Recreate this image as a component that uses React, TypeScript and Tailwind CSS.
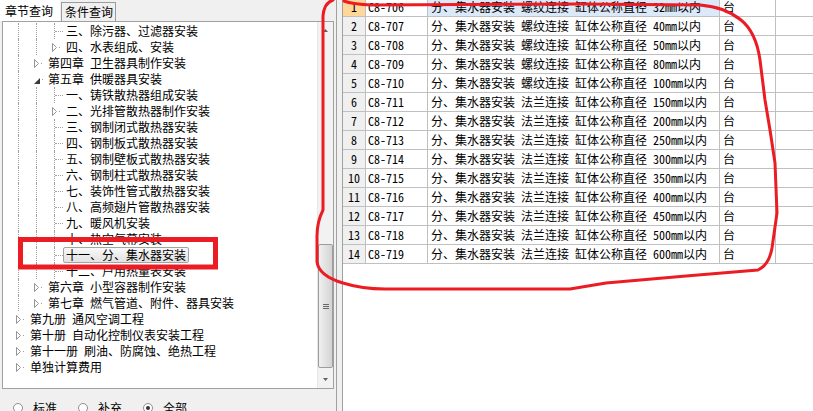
import React from 'react'

type Node = { lv: number; kind: 'leaf' | 'closed' | 'open'; text: string; sel?: boolean }

const tree: Node[] = [
  { lv: 3, kind: 'leaf', text: '三、除污器、过滤器安装' },
  { lv: 3, kind: 'closed', text: '四、水表组成、安装' },
  { lv: 2, kind: 'closed', text: '第四章 卫生器具制作安装' },
  { lv: 2, kind: 'open', text: '第五章 供暖器具安装' },
  { lv: 3, kind: 'leaf', text: '一、铸铁散热器组成安装' },
  { lv: 3, kind: 'closed', text: '二、光排管散热器制作安装' },
  { lv: 3, kind: 'leaf', text: '三、钢制闭式散热器安装' },
  { lv: 3, kind: 'leaf', text: '四、钢制板式散热器安装' },
  { lv: 3, kind: 'leaf', text: '五、钢制壁板式散热器安装' },
  { lv: 3, kind: 'leaf', text: '六、钢制柱式散热器安装' },
  { lv: 3, kind: 'leaf', text: '七、装饰性管式散热器安装' },
  { lv: 3, kind: 'leaf', text: '八、高频翅片管散热器安装' },
  { lv: 3, kind: 'leaf', text: '九、暖风机安装' },
  { lv: 3, kind: 'leaf', text: '十、热空气幕安装' },
  { lv: 3, kind: 'leaf', text: '十一、分、集水器安装', sel: true },
  { lv: 3, kind: 'leaf', text: '十二、户用热量表安装' },
  { lv: 2, kind: 'closed', text: '第六章 小型容器制作安装' },
  { lv: 2, kind: 'closed', text: '第七章 燃气管道、附件、器具安装' },
  { lv: 1, kind: 'closed', text: '第九册 通风空调工程' },
  { lv: 1, kind: 'closed', text: '第十册 自动化控制仪表安装工程' },
  { lv: 1, kind: 'closed', text: '第十一册 刷油、防腐蚀、绝热工程' },
  { lv: 1, kind: 'closed', text: '单独计算费用' },
]

const sizes = [32, 40, 50, 80, 100, 150, 200, 250, 300, 350, 400, 450, 500, 600]
const rows = sizes.map((d, i) => ({
  n: i + 1,
  code: `C8-${706 + i}`,
  name: ['分、集水器安装', i < 5 ? '螺纹连接' : '法兰连接', '缸体公称直径', `${d}mm以内`].join('\u2002'),
}))

function Guide() {
  return (
    <div className="w-[18px] h-full flex">
      <div className="w-[9px]" />
      <div className="h-full border-l border-dotted border-[#a0a0a0]" />
    </div>
  )
}

function Connector({ kind }: { kind: Node['kind'] }) {
  if (kind === 'leaf') {
    return (
      <div className="w-[18px] h-full flex">
        <div className="w-[9px]" />
        <div className="flex-1 h-full border-l border-dotted border-[#a0a0a0] flex items-center">
          <div className="w-full border-t border-dotted border-[#a0a0a0]" />
        </div>
      </div>
    )
  }
  if (kind === 'open') {
    return (
      <div className="w-[18px] h-full flex items-center">
        <div className="w-[7px]" />
        <svg width="6" height="6" viewBox="0 0 6 6" className="mt-[3px]">
          <path d="M6 0 V6 H0 Z" fill="#3a3a3a" />
        </svg>
        <div className="ml-[2px] w-px h-px bg-[#a0a0a0]" />
      </div>
    )
  }
  return (
    <div className="w-[18px] h-full flex items-center">
      <div className="w-[7px]" />
      <svg width="5" height="9" viewBox="0 0 5 9">
        <path d="M0.5 0.5 L4.5 4.5 L0.5 8.5 Z" fill="#fff" stroke="#959595" strokeWidth="1" />
      </svg>
      <div className="ml-[2px] w-px h-px bg-[#a0a0a0]" />
    </div>
  )
}

function TreeRow({ node }: { node: Node }) {
  const guides = []
  for (let k = 1; k < node.lv; k++) guides.push(<Guide key={k} />)
  return (
    <div className="h-[16px] flex pl-[6px]">
      {guides}
      <Connector kind={node.kind} />
      <div
        className={
          node.sel
            ? 'h-full px-[2px] border border-[#a3a3a3] rounded-[2px] bg-gradient-to-b from-[#f8f8f8] to-[#e2e2e2] leading-[14px] whitespace-pre'
            : 'h-full px-[2px] border border-transparent leading-[14px] whitespace-pre'
        }
      >
        {node.text.split(' ').join('\u2002')}
      </div>
    </div>
  )
}

function Radio({ label, on }: { label: string; on?: boolean }) {
  return (
    <div className="w-[65px] flex items-center">
      <div className="w-[10px] h-[10px] rounded-full border border-[#8e8f8f] bg-white flex items-center justify-center">
        {on && <div className="w-[4px] h-[4px] rounded-full bg-[#333]" />}
      </div>
      <span className="ml-[10px]">{label}</span>
    </div>
  )
}

export default function App() {
  return (
    <div className="relative w-[813px] h-[411px] overflow-hidden flex bg-[#f0f0f0] text-[12px] text-black font-['Noto_Sans_Mono_CJK_SC','Noto_Sans_CJK_SC',sans-serif]">
      {/* left: chapter tree */}
      <div className="w-[334px] flex flex-col shrink-0">
        <div className="h-[21px] shrink-0 flex items-end">
          <div className="h-[21px] w-[60px] pl-[5px] flex items-center bg-white">章节查询</div>
          <div className="ml-[1px] h-[19px] w-[55px] pl-[3px] flex items-center border border-b-0 border-[#9b9b9b] bg-[#f0f0f0]">
            条件查询
          </div>
        </div>
        <div className="ml-[2px] w-[332px] h-[368px] shrink-0 border border-[#a0a0a0] flex bg-white">
          <div className="flex-1 pt-[1px] overflow-hidden">
            {tree.map((n, i) => (
              <TreeRow key={i} node={n} />
            ))}
          </div>
          <div className="w-[16px] flex flex-col bg-[#f2f2f2] border-l border-[#e6e6e6]">
            <div className="h-[17px] flex items-center justify-center">
              <svg width="5" height="3" viewBox="0 0 5 3">
                <path d="M2.5 0 L5 3 H0 Z" fill="#606060" />
              </svg>
            </div>
            <div className="flex-1 flex flex-col">
              <div className="h-[205px]" />
              <div className="h-[124px] rounded-[2px] border border-[#9c9c9c] bg-gradient-to-r from-[#f0f0f0] to-[#d4d4d4] flex flex-col items-center justify-center gap-px">
                <div className="w-[6px] h-px bg-[#6a6a6a]" />
                <div className="w-[6px] h-px bg-[#6a6a6a]" />
                <div className="w-[6px] h-px bg-[#6a6a6a]" />
              </div>
            </div>
            <div className="h-[17px] flex items-center justify-center">
              <svg width="5" height="3" viewBox="0 0 5 3">
                <path d="M0 0 H5 L2.5 3 Z" fill="#606060" />
              </svg>
            </div>
          </div>
        </div>
        <div className="h-[38px] shrink-0 flex items-center pl-[13px]">
          <Radio label="标准" />
          <Radio label="补充" />
          <Radio label="全部" on />
        </div>
      </div>

      {/* splitter */}
      <div className="w-[9px] shrink-0 flex pl-[2px] gap-[5px]">
        <div className="w-px bg-[#a0a0a0]" />
        <div className="w-px bg-[#a0a0a0]" />
      </div>

      {/* right: quota grid */}
      <div className="flex-1 bg-white">
        <div className="-mt-[2px]">
          {rows.map((r) => (
            <div key={r.n} className="h-[19px] flex leading-[18px] whitespace-pre">
              <div
                className={
                  (r.n === 1 ? 'bg-[#ffd798] ' : 'bg-[#f0f0f0] ') +
                  'w-[23px] text-center border-r border-b border-[#c0c0c0]'
                }
              >
                {r.n}
              </div>
              <div className="w-[62px] pl-[2px] border-r border-b border-[#c0c0c0]">{r.code}</div>
              <div
                className={
                  (r.n === 1 ? 'bg-[#dce9f8] ' : '') + 'w-[292px] pl-[3px] border-r border-b border-[#c0c0c0]'
                }
              >
                {r.name}
              </div>
              <div className="w-[56px] pl-[3px] border-r border-b border-[#c0c0c0]">台</div>
              <div className="flex-1 border-b border-[#c0c0c0]" />
            </div>
          ))}
        </div>
      </div>

      {/* red hand-drawn annotations */}
      <svg className="absolute inset-0 pointer-events-none" width="813" height="411" viewBox="0 0 813 411">
        <rect x="20.5" y="239.5" width="195" height="27.5" fill="none" stroke="#ec1c24" strokeWidth="5" />
        <path
          d="M 333 0 Q 324 3 323 16 L 323 210 Q 317 222 317 236 L 317 262 Q 319 276 343 283 Q 362 289 385 289 L 570 289 L 606 283 L 686 276 L 758 270 Q 769 265 772 248 L 777 213 L 775 163 L 770 130 L 765 100 L 760 60 Q 756 32 741 20 Q 725 7 700 5 L 580 4 L 372 5 Q 352 4 344 1"
          fill="none"
          stroke="#ec1c24"
          strokeWidth="3"
          strokeLinejoin="round"
          strokeLinecap="round"
        />
      </svg>
    </div>
  )
}
